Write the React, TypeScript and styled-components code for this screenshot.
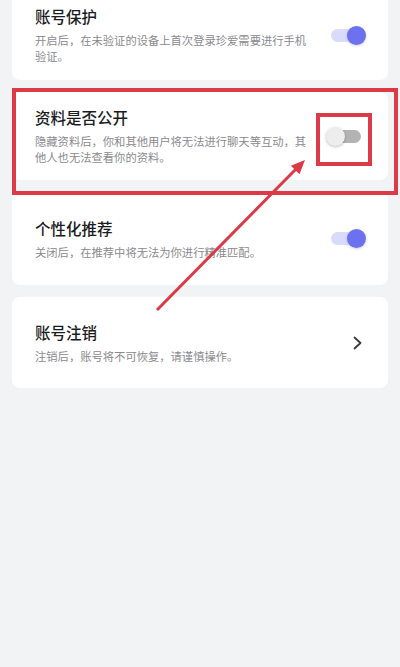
import { createGlobalStyle, styled } from "styled-components";

const GlobalStyle = createGlobalStyle`
  html, body {
    margin: 0;
    padding: 0;
    background: #f2f3f5;
    overflow: hidden;
  }
  body {
    font-family: "Noto Sans CJK SC", "Noto Sans", sans-serif;
  }
`;

const Page = styled.div`
  position: relative;
  width: 400px;
  height: 667px;
  overflow: hidden;
`;

const List = styled.div`
  display: flex;
  flex-direction: column;
  gap: 12px;
  padding: 0 12px;
  margin-top: -10px;
`;

const Card = styled.div<{ $h: number }>`
  background: #fff;
  border-radius: 8px;
  height: ${(p) => p.$h}px;
  display: flex;
  align-items: center;
  padding: 0 22px 0 23px;
  box-sizing: border-box;
`;

const TextBlock = styled.div`
  width: 276px;
  display: flex;
  flex-direction: column;
`;

const Title = styled.div`
  font-size: 15.5px;
  line-height: 20px;
  font-weight: 500;
  color: #1c1c1f;
`;

const Desc = styled.div`
  margin-top: 6px;
  font-size: 11.3px;
  line-height: 16px;
  color: #8a8a8e;
`;

const Toggle = styled.div`
  margin-left: auto;
  position: relative;
  width: 40px;
  height: 19px;
  display: flex;
  align-items: center;
`;

const Track = styled.div<{ $on: boolean }>`
  margin: 0 5px;
  width: 30px;
  height: 13px;
  border-radius: 7px;
  background: ${(p) => (p.$on ? "#d9dbfb" : "#b3b3b3")};
`;

const Knob = styled.div<{ $on: boolean }>`
  position: absolute;
  top: 0;
  ${(p) => (p.$on ? "right: 0;" : "left: 0;")}
  width: 19px;
  height: 19px;
  border-radius: 50%;
  background: ${(p) => (p.$on ? "#6b71ef" : "#ededed")};
  box-shadow: 0 1px 3px rgba(0, 0, 0, ${(p) => (p.$on ? 0.18 : 0.25)});
`;

const Chevron = styled.svg`
  margin-left: auto;
  margin-right: 4px;
  width: 9px;
  height: 14px;
`;

const Mark = styled.div<{ $x: number; $y: number; $w: number; $h: number }>`
  position: absolute;
  left: ${(p) => p.$x}px;
  top: ${(p) => p.$y}px;
  width: ${(p) => p.$w}px;
  height: ${(p) => p.$h}px;
  border: 4px solid #db3a46;
  box-sizing: border-box;
  pointer-events: none;
`;

const ArrowLayer = styled.svg`
  position: absolute;
  left: 0;
  top: 0;
  width: 400px;
  height: 667px;
  pointer-events: none;
`;

function Switch({ on }: { on: boolean }) {
  return (
    <Toggle>
      <Track $on={on} />
      <Knob $on={on} />
    </Toggle>
  );
}

export default function App() {
  return (
    <Page>
      <GlobalStyle />
      <List>
        <Card $h={90}>
          <TextBlock>
            <Title>账号保护</Title>
            <Desc>开启后，在未验证的设备上首次登录珍爱需要进行手机验证。</Desc>
          </TextBlock>
          <Switch on />
        </Card>
        <Card $h={88}>
          <TextBlock>
            <Title>资料是否公开</Title>
            <Desc>隐藏资料后，你和其他用户将无法进行聊天等互动，其他人也无法查看你的资料。</Desc>
          </TextBlock>
          <Switch on={false} />
        </Card>
        <Card $h={93}>
          <TextBlock>
            <Title>个性化推荐</Title>
            <Desc>关闭后，在推荐中将无法为你进行精准匹配。</Desc>
          </TextBlock>
          <Switch on />
        </Card>
        <Card $h={91}>
          <TextBlock>
            <Title>账号注销</Title>
            <Desc>注销后，账号将不可恢复，请谨慎操作。</Desc>
          </TextBlock>
          <Chevron viewBox="0 0 9 14">
            <path d="M1.5 1.5 L7.5 7 L1.5 12.5" fill="none" stroke="#3a3a3e" strokeWidth="1.8" strokeLinecap="round" strokeLinejoin="round" />
          </Chevron>
        </Card>
      </List>

      <Mark $x={12} $y={88} $w={386} $h={107} />
      <Mark $x={316} $y={113} $w={56} $h={53} />
      <ArrowLayer viewBox="0 0 400 667">
        <line x1="157" y1="310" x2="296" y2="169" stroke="#db3a46" strokeWidth="3" />
        <polygon points="305,160 299.5,174.2 290.9,165.8" fill="#db3a46" />
      </ArrowLayer>
    </Page>
  );
}
